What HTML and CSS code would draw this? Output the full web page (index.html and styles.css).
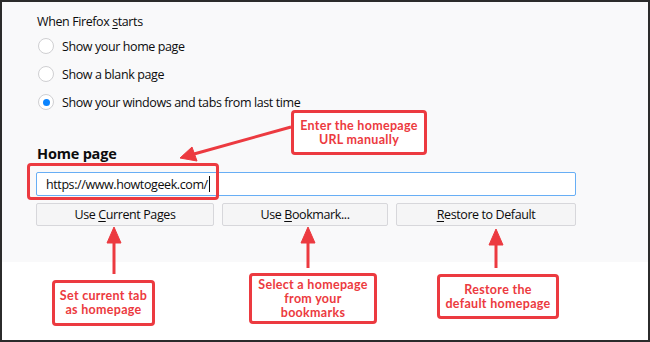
FILE: index.html
```html
<!DOCTYPE html>
<html lang="en">
<head>
  <meta charset="UTF-8">
  <title>Firefox Home page settings</title>
  <link rel="stylesheet" href="styles.css">
</head>
<body>
  <div class="frame">
    <section class="prefs">
      <div class="group-label">When Firefox <u>s</u>tarts</div>
      <label class="radio-row"><span class="radio"></span>Show your home page</label>
      <label class="radio-row"><span class="radio"></span>Show a blank page</label>
      <label class="radio-row"><span class="radio checked"></span>Show your windows and tabs from last time</label>

      <h2 class="section-title">Home page</h2>
      <div class="url-input">https://www.howtogeek.com/<span class="caret"></span></div>
      <div class="button-row">
        <button class="btn btn-current">Use <u>C</u>urrent Pages</button>
        <button class="btn btn-bookmark">Use <u>B</u>ookmark...</button>
        <button class="btn btn-restore"><u>R</u>estore to Default</button>
      </div>
    </section>
    <section class="blank"></section>

    <!-- annotations -->
    <svg class="arrows" width="650" height="342" viewBox="0 0 650 342">
      <g stroke="#ec3a40" stroke-width="3" fill="#ec3a40">
        <line x1="291" y1="127" x2="194" y2="154"/>
        <polygon points="180,158 192,147 197,161" stroke-width="1"/>
        <line x1="114" y1="274" x2="114" y2="240"/>
        <polygon points="114,227 107,243 121,243" stroke-width="1"/>
        <line x1="308" y1="268" x2="308" y2="240"/>
        <polygon points="308,227 301,243 315,243" stroke-width="1"/>
        <line x1="496" y1="268" x2="496" y2="242"/>
        <polygon points="496,229 489,245 503,245" stroke-width="1"/>
      </g>
    </svg>
    <div class="mark mark-url"></div>
    <div class="callout callout-url"><p>Enter the homepage</p><p>URL manually</p></div>
    <div class="callout callout-current"><p>Set current tab</p><p>as homepage</p></div>
    <div class="callout callout-bookmark"><p>Select a homepage</p><p>from your</p><p>bookmarks</p></div>
    <div class="callout callout-restore"><p>Restore the</p><p>default homepage</p></div>
  </div>
</body>
</html>
```

FILE: styles.css
```css
body {
  margin: 0;
  padding: 0;
  background-color: #FFFFFF;
}
.frame {
  position: relative;
  width: 650px;
  height: 342px;
  box-sizing: border-box;
  border: 2px solid #2B2B2B;
  display: flex;
  flex-direction: column;
  font-family: 'Open Sans', 'Noto Sans', Arial, sans-serif;
  font-size: 12.5px;
  letter-spacing: -0.4px;
  color: #0C0C0D;
}
.prefs {
  height: 260px;
  box-sizing: border-box;
  background-color: #F9F9FA;
  padding: 10px 0 0 34px;
}
.blank {
  flex: 1;
  background-color: #FFFFFF;
}
.group-label {
  height: 20px;
  line-height: 20px;
  padding-left: 1px;
}
.group-label u,
.btn u {
  text-decoration-thickness: 1px;
  text-underline-offset: 2px;
}
.radio-row {
  display: flex;
  align-items: center;
  height: 28px;
}
.radio {
  width: 14px;
  height: 14px;
  border: 1px solid #CFCFD2;
  border-radius: 50%;
  background-color: #FFFFFF;
  margin: 0 8px 0 2px;
  display: flex;
  align-items: center;
  justify-content: center;
}
.radio.checked::after {
  content: '';
  width: 7px;
  height: 7px;
  border-radius: 50%;
  background-color: #0A84FF;
}
.section-title {
  margin: 28px 0 0;
  height: 20px;
  line-height: 20px;
  font-size: 14.5px;
  font-weight: 700;
  letter-spacing: -0.2px;
  padding-left: 1px;
}
.url-input {
  margin-top: 8px;
  width: 540px;
  height: 24px;
  box-sizing: border-box;
  border: 1px solid #67AEF5;
  border-radius: 2px;
  background-color: #FFFFFF;
  padding-left: 9px;
  display: flex;
  align-items: center;
}
.caret {
  width: 1px;
  height: 16px;
  background-color: #0C0C0D;
  margin-left: 1px;
}
.button-row {
  display: flex;
  gap: 8px;
  margin-top: 7px;
  width: 540px;
}
.btn {
  height: 23px;
  padding: 0;
  border: 1px solid #D7D7DB;
  border-radius: 2px;
  background-color: #F5F5F6;
  font-family: inherit;
  font-size: 12.5px;
  letter-spacing: -0.4px;
  color: #0C0C0D;
}
.btn-current { width: 178px; }
.btn-bookmark { width: 166px; }
.btn-restore { width: 180px; }

.arrows {
  position: absolute;
  top: -2px;
  left: -2px;
}
.mark {
  position: absolute;
  border: 3px solid #EC3A40;
  border-radius: 4px;
}
.mark-url {
  left: 25px;
  top: 161px;
  width: 186px;
  height: 31px;
}
.callout {
  position: absolute;
  box-sizing: border-box;
  border: 3px solid #EC3A40;
  border-radius: 4px;
  background-color: #FFFFFF;
  color: #EC3A40;
  font-family: 'Lato', 'Open Sans', sans-serif;
  font-weight: 700;
  font-size: 12.5px;
  text-align: center;
  display: flex;
  flex-direction: column;
  align-items: center;
  justify-content: center;
  letter-spacing: 0.3px;
}
.callout p {
  margin: 0;
  height: 14px;
  line-height: 14px;
}
.callout-url {
  left: 289px;
  top: 108px;
  width: 136px;
  height: 45px;
}
.callout-current {
  left: 50px;
  top: 278px;
  width: 103px;
  height: 46px;
}
.callout-bookmark {
  left: 247px;
  top: 271px;
  width: 128px;
  height: 51px;
}
.callout-restore {
  left: 435px;
  top: 272px;
  width: 122px;
  height: 45px;
}
```
